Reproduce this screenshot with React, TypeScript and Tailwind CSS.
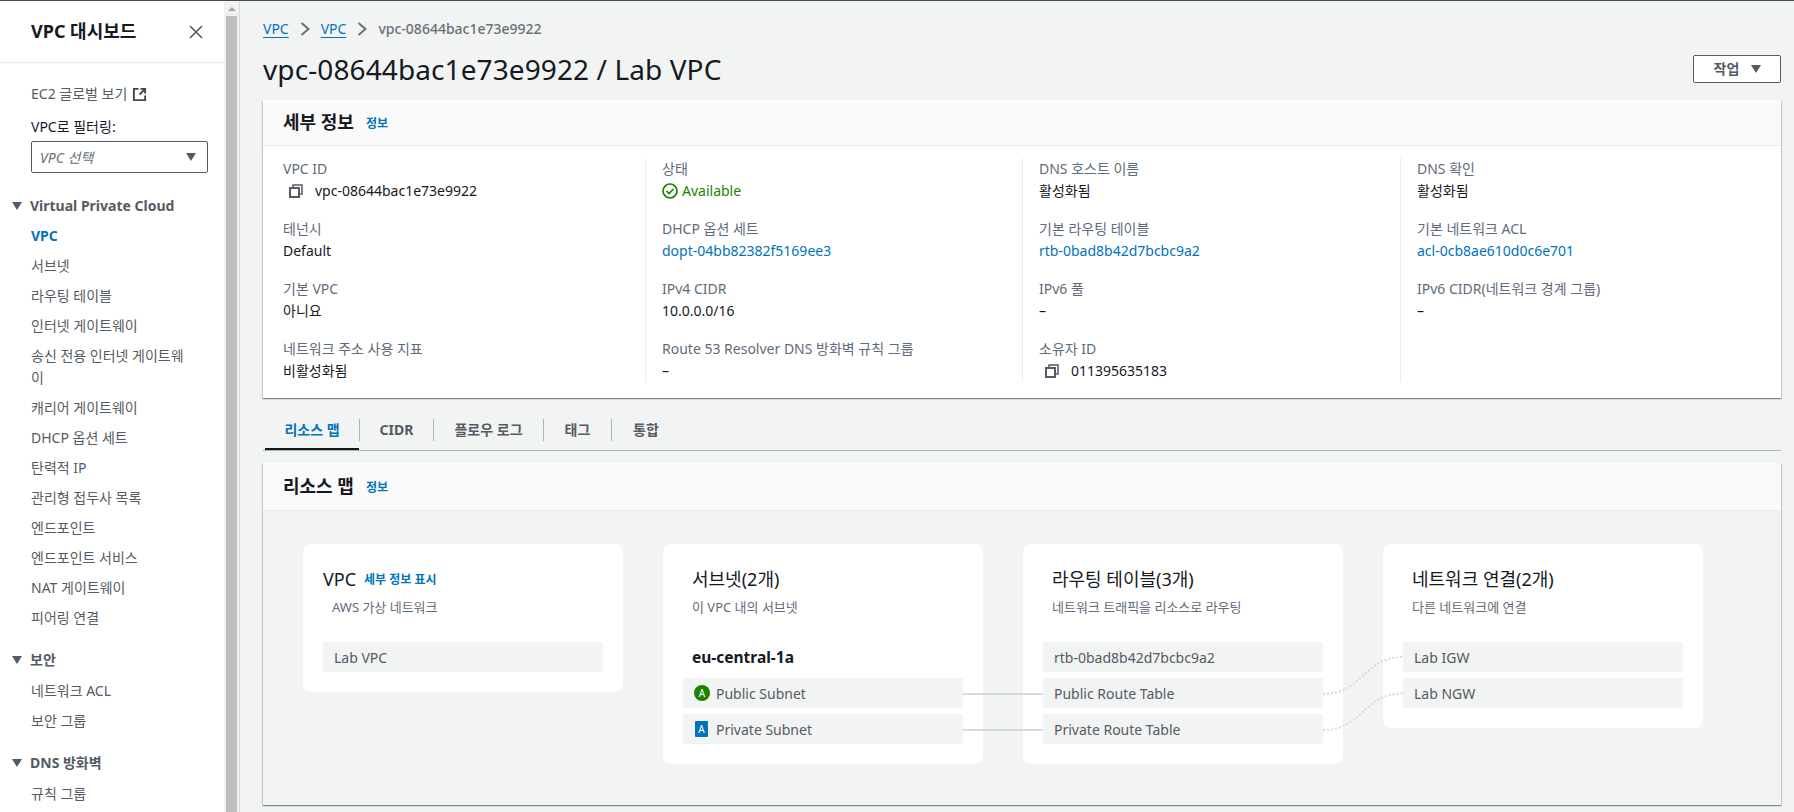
const fontStack = "font-['Noto_Sans','Noto_Sans_CJK_KR',sans-serif]";

const Caret = ({ className }: { className: string }) => (
  <svg viewBox="0 0 10 8" className={className}>
    <path d="M0 0h10L5 8z" fill="currentColor" />
  </svg>
);

const CopyIcon = () => (
  <svg viewBox="0 0 16 16" className="w-4 h-4 text-[#545b64]" fill="none" stroke="currentColor" strokeWidth="2">
    <path d="M2 5h9v9H2z" />
    <path d="M5 5V2h9v9h-3" strokeWidth="1.5" />
  </svg>
);

const Chevron = () => (
  <svg viewBox="0 0 10 16" className="w-[10px] h-4 text-[#687078]" fill="none" stroke="currentColor" strokeWidth="2">
    <path d="M1.5 2l7 6-7 6" />
  </svg>
);

const NavItem = ({ label, active, wrap }: { label: string; active?: boolean; wrap?: boolean }) => (
  <li className={`pl-[31px] pr-[34px] ${wrap ? "leading-[22px] py-1" : "leading-[30px]"} ${active ? "font-bold text-[#0073bb]" : "text-[#545b64]"}`}>
    {label}
  </li>
);

const NavSection = ({ title, className }: { title: string; className: string }) => (
  <div className={`flex items-center pl-3 gap-[8px] font-bold text-[#545b64] leading-5 ${className}`}>
    <Caret className="w-[10px] h-2" />
    <span>{title}</span>
  </div>
);

const Sidebar = () => (
  <aside className="w-[224px] shrink-0 bg-white text-[14px] overflow-hidden">
    <div className="h-[62px] border-b border-[#eaeded] flex items-center justify-between pl-[31px] pr-[20px]">
      <h2 className="text-[18px] font-bold text-[#16191f]">VPC 대시보드</h2>
      <svg viewBox="0 0 16 16" className="w-4 h-4 text-[#545b64]" fill="none" stroke="currentColor" strokeWidth="1.6">
        <path d="M2 2l12 12M14 2L2 14" />
      </svg>
    </div>
    <div className="pl-[31px] pr-[16px] pt-[21px]">
      <div className="flex items-center gap-[5px] leading-5 text-[#545b64]">
        EC2 글로벌 보기
        <svg viewBox="0 0 16 16" className="w-[15px] h-[15px] text-[#414750]" fill="none" stroke="currentColor" strokeWidth="2">
          <path d="M7 2H2v12h12V9" />
          <path d="M9 2h5v5M14 2L8 8" />
        </svg>
      </div>
      <div className="mt-[13px] leading-5 text-[#16191f]">VPC로 필터링:</div>
      <div className="mt-[4px] h-8 w-[177px] border border-[#545b64] rounded-[2px] flex items-center justify-between pl-2 pr-[11px] italic text-[#687078]">
        VPC 선택
        <Caret className="w-[10px] h-2 text-[#545b64]" />
      </div>
    </div>
    <NavSection title="Virtual Private Cloud" className="mt-[23px]" />
    <ul className="mt-[5px]">
      <NavItem label="VPC" active />
      <NavItem label="서브넷" />
      <NavItem label="라우팅 테이블" />
      <NavItem label="인터넷 게이트웨이" />
      <NavItem label="송신 전용 인터넷 게이트웨이" wrap />
      <NavItem label="캐리어 게이트웨이" />
      <NavItem label="DHCP 옵션 세트" />
      <NavItem label="탄력적 IP" />
      <NavItem label="관리형 접두사 목록" />
      <NavItem label="엔드포인트" />
      <NavItem label="엔드포인트 서비스" />
      <NavItem label="NAT 게이트웨이" />
      <NavItem label="피어링 연결" />
    </ul>
    <NavSection title="보안" className="mt-[17px]" />
    <ul className="mt-[6px]">
      <NavItem label="네트워크 ACL" />
      <NavItem label="보안 그룹" />
    </ul>
    <NavSection title="DNS 방화벽" className="mt-[17px]" />
    <ul className="mt-[6px]">
      <NavItem label="규칙 그룹" />
    </ul>
  </aside>
);

const Scrollbar = () => (
  <div className="w-[15px] shrink-0 bg-[#f1f1f1] flex flex-col pl-[2px]">
    <div className="w-[11px] h-[15px] flex items-center justify-center">
      <div className="w-0 h-0 border-x-[4px] border-x-transparent border-b-[4px] border-b-[#a3a3a3]" />
    </div>
    <div className="w-[11px] flex-1 bg-[#bebebe]" />
  </div>
);

type Field = { label: string; value: string; kind?: "link" | "copy" | "status" };

const columns: { width: string; fields: Field[] }[] = [
  {
    width: "w-[382px] pl-5",
    fields: [
      { label: "VPC ID", value: "vpc-08644bac1e73e9922", kind: "copy" },
      { label: "테넌시", value: "Default" },
      { label: "기본 VPC", value: "아니요" },
      { label: "네트워크 주소 사용 지표", value: "비활성화됨" },
    ],
  },
  {
    width: "w-[377px] pl-4 border-l border-[#eaeded]",
    fields: [
      { label: "상태", value: "Available", kind: "status" },
      { label: "DHCP 옵션 세트", value: "dopt-04bb82382f5169ee3", kind: "link" },
      { label: "IPv4 CIDR", value: "10.0.0.0/16" },
      { label: "Route 53 Resolver DNS 방화벽 규칙 그룹", value: "–" },
    ],
  },
  {
    width: "w-[378px] pl-4 border-l border-[#eaeded]",
    fields: [
      { label: "DNS 호스트 이름", value: "활성화됨" },
      { label: "기본 라우팅 테이블", value: "rtb-0bad8b42d7bcbc9a2", kind: "link" },
      { label: "IPv6 풀", value: "–" },
      { label: "소유자 ID", value: "011395635183", kind: "copy" },
    ],
  },
  {
    width: "flex-1 pl-4 border-l border-[#eaeded]",
    fields: [
      { label: "DNS 확인", value: "활성화됨" },
      { label: "기본 네트워크 ACL", value: "acl-0cb8ae610d0c6e701", kind: "link" },
      { label: "IPv6 CIDR(네트워크 경계 그룹)", value: "–" },
    ],
  },
];

const FieldValue = ({ field }: { field: Field }) => {
  if (field.kind === "copy") {
    return (
      <div className="flex items-center pl-[5px] gap-[11px] text-[#16191f]">
        <CopyIcon />
        {field.value}
      </div>
    );
  }
  if (field.kind === "status") {
    return (
      <div className="flex items-center gap-1 text-[#1d8102]">
        <svg viewBox="0 0 16 16" className="w-4 h-4" fill="none" stroke="currentColor" strokeWidth="1.7">
          <circle cx="8" cy="8" r="7" />
          <path d="M4.5 8l2.5 2.5 4.5-4.5" />
        </svg>
        {field.value}
      </div>
    );
  }
  return <div className={field.kind === "link" ? "text-[#0073bb]" : "text-[#16191f]"}>{field.value}</div>;
};

const CardHeader = ({ title, h }: { title: string; h: string }) => (
  <div className={`${h} bg-[#fafafa] border-b border-[#eaeded] flex items-center gap-3 pl-5`}>
    <h2 className="text-[18px] font-bold text-[#16191f]">{title}</h2>
    <a className="text-[12px] font-bold text-[#0073bb] mt-[3px]">정보</a>
  </div>
);

const Details = () => (
  <section className="bg-white shadow-[0_1px_1px_0_rgba(0,28,36,0.3),1px_1px_1px_0_rgba(0,28,36,0.15),-1px_1px_1px_0_rgba(0,28,36,0.15)] h-[298px]">
    <CardHeader title="세부 정보" h="h-[46px]" />
    <div className="flex pt-3 text-[14px] leading-[22px]">
      {columns.map((col, i) => (
        <div key={i} className={`${col.width} h-[224px]`}>
          {col.fields.map((f) => (
            <div key={f.label} className="h-[60px]">
              <div className="text-[#5f6b7a]">{f.label}</div>
              <FieldValue field={f} />
            </div>
          ))}
        </div>
      ))}
    </div>
  </section>
);

const tabs = [
  { label: "리소스 맵", w: "w-[95px]" },
  { label: "CIDR", w: "w-[74px]" },
  { label: "플로우 로그", w: "w-[110px]" },
  { label: "태그", w: "w-[68px]" },
  { label: "통합", w: "w-[68px]" },
];

const Tabs = () => (
  <div className="mt-[21px] h-[32px] border-b border-[#aab7b8] flex pl-[2px] text-[14px] font-bold text-[#545b64]">
    {tabs.map((t, i) => (
      <div key={t.label} className={`${t.w} relative h-[22px] pb-[2px] flex items-center justify-center ${i < 4 ? "border-r border-[#aab7b8]" : ""} ${i === 0 ? "text-[#0073bb]" : ""}`}>
        {t.label}
        {i === 0 && <div className="absolute left-0 right-0 top-[29px] h-[2px] bg-[#16191f]" />}
      </div>
    ))}
  </div>
);

const MapRow = ({ label, icon }: { label: string; icon?: "public" | "private" }) => (
  <div className="h-[30px] bg-[#f2f3f3] rounded-[2px] flex items-center pl-[11px] text-[14px] text-[#545b64]">
    {icon === "public" && (
      <span className="w-4 h-4 mr-[6px] rounded-full bg-[#1d8102] text-white text-[10px] flex items-center justify-center">A</span>
    )}
    {icon === "private" && (
      <span className="w-[13px] h-4 ml-[1px] mr-[8px] rounded-[1px] bg-[#0073bb] text-white text-[10px] flex items-center justify-center">A</span>
    )}
    {label}
  </div>
);

const MapCard = ({ title, sub, children, link }: { title: string; sub: string; children: React.ReactNode; link?: boolean }) => (
  <div className="w-[320px] shrink-0 bg-white rounded-lg px-5 pt-6 pb-5">
    <div className={`flex items-center gap-2 h-[22px] ${link ? "" : "pl-[9px]"}`}>
      <h3 className="text-[18px] text-[#16191f]">{title}</h3>
      {link && <a className="text-[12px] font-bold text-[#0073bb] mt-[2px]">세부 정보 표시</a>}
    </div>
    <p className="mt-[7px] pl-[9px] text-[13px] leading-5 text-[#5f6b7a]">{sub}</p>
    <div className="mt-[25px] flex flex-col gap-[6px]">{children}</div>
  </div>
);

const ResourceMap = () => (
  <section className="mt-3 bg-[#f2f3f3] shadow-[0_1px_1px_0_rgba(0,28,36,0.3),1px_1px_1px_0_rgba(0,28,36,0.15),-1px_1px_1px_0_rgba(0,28,36,0.15)] h-[342px]">
    <CardHeader title="리소스 맵" h="h-[48px]" />
    <div className="relative flex items-start gap-10 pl-10 pt-[33px]">
      <MapCard title="VPC" sub="AWS 가상 네트워크" link>
        <MapRow label="Lab VPC" />
      </MapCard>
      <MapCard title="서브넷(2개)" sub="이 VPC 내의 서브넷">
        <div className="pl-[9px] h-[30px] text-[15.5px] font-bold text-[#16191f] leading-[30px]">eu-central-1a</div>
        <MapRow label="Public Subnet" icon="public" />
        <MapRow label="Private Subnet" icon="private" />
      </MapCard>
      <MapCard title="라우팅 테이블(3개)" sub="네트워크 트래픽을 리소스로 라우팅">
        <MapRow label="rtb-0bad8b42d7bcbc9a2" />
        <MapRow label="Public Route Table" />
        <MapRow label="Private Route Table" />
      </MapCard>
      <MapCard title="네트워크 연결(2개)" sub="다른 네트워크에 연결">
        <MapRow label="Lab IGW" />
        <MapRow label="Lab NGW" />
      </MapCard>
      {/* connector lines lie over the cards */}
      <svg className="absolute left-0 top-0 w-[1518px] h-[294px] pointer-events-none" viewBox="0 0 1518 294" fill="none">
        <path d="M700 183H780M700 219H780" stroke="#d5dbdb" strokeWidth="2" />
        <g stroke="#d5dbdb" strokeWidth="2" strokeDasharray="2 2">
          <path d="M1060 183C1100 183 1100 146 1140 146" />
          <path d="M1060 219C1100 219 1100 182.500 1140 182.500" />
        </g>
      </svg>
    </div>
  </section>
);

const Main = () => (
  <main className="flex-1 min-w-0 border-l border-[#d5dbdb] pl-[23px] pr-[13px] bg-[#f2f3f3]">
    <div className="pt-[18px] h-[19px] box-content flex items-center gap-[11px] text-[14px]">
      <a className="text-[#0073bb] underline underline-offset-[3px]">VPC</a>
      <Chevron />
      <a className="text-[#0073bb] underline underline-offset-[3px]">VPC</a>
      <Chevron />
      <span className="font-medium text-[#687078]">vpc-08644bac1e73e9922</span>
    </div>
    <div className="flex items-center justify-between h-[62px]">
      <h1 className="text-[28px] tracking-[0.1px] text-[#16191f]">vpc-08644bac1e73e9922 / Lab VPC</h1>
      <button className="w-[88px] h-[28px] pb-[1px] pl-[1px] bg-white border border-[#545b64] rounded-[2px] flex items-center justify-center gap-[12px] text-[14px] font-bold text-[#545b64]">
        작업
        <Caret className="w-[10px] h-2" />
      </button>
    </div>
    <Details />
    <Tabs />
    <ResourceMap />
  </main>
);

export default function App() {
  return (
    <div className={`${fontStack} w-[1794px] h-[812px] overflow-hidden flex flex-col bg-[#f2f3f3]`}>
      <div className="h-[1px] bg-[#414d5c] shrink-0" />
      <div className="flex flex-1 min-h-0">
        <Sidebar />
        <Scrollbar />
        <Main />
      </div>
    </div>
  );
}
